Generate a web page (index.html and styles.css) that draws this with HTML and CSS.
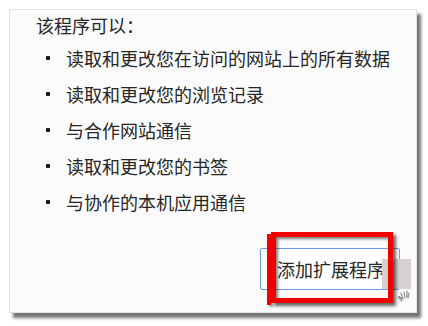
FILE: index.html
```html
<!DOCTYPE html>
<html lang="zh-CN">
<head>
<meta charset="utf-8">
<title>添加扩展程序</title>
<link rel="stylesheet" href="styles.css">
</head>
<body>
<div class="dialog">
  <div class="title">该程序可以：</div>
  <ul class="perms">
    <li>读取和更改您在访问的网站上的所有数据</li>
    <li>读取和更改您的浏览记录</li>
    <li>与合作网站通信</li>
    <li>读取和更改您的书签</li>
    <li>与协作的本机应用通信</li>
  </ul>
  <div class="footer">
    <button class="add-btn">添加扩展程序</button>
  </div>
</div>
<div class="cover"></div>
<div class="mark-line"></div>
<div class="mark-box"></div>
<svg class="cursor" width="16" height="16" viewBox="0 0 16 16">
  <path d="M2 10 L6 14 M5 6 L7 12 M8 5 L9 11 M11 4 L11 10 M13 6 L12 11" stroke="#8a8a8a" stroke-width="1.2" fill="none" stroke-linecap="round"/>
  <path d="M3 9 L6 12" stroke="#555" stroke-width="1" fill="none"/>
</svg>
</body>
</html>
```
FILE: styles.css
```css
html, body {
  margin: 0;
  padding: 0;
  background: #ffffff;
}
body {
  position: relative;
  width: 428px;
  height: 326px;
  overflow: hidden;
  font-family: "Noto Sans CJK SC", "Noto Sans", sans-serif;
  color: #262626;
}
.dialog {
  margin: 9px 0 0 9px;
  width: 408px;
  height: 304px;
  box-sizing: border-box;
  background: #fbfbfb;
  border: 1px solid #e4e4e4;
  box-shadow: 4px 5px 3px rgba(0, 0, 0, 0.55);
  display: flex;
  flex-direction: column;
  padding: 3px 0 0 26px;
}
.title {
  font-size: 18px;
  line-height: 24px;
}
.perms {
  list-style: none;
  margin: 3px 0 0 0;
  padding: 0;
}
.perms li {
  display: flex;
  align-items: center;
  font-size: 18px;
  line-height: 36px;
  white-space: nowrap;
}
.perms li::before {
  content: "";
  width: 4px;
  height: 4px;
  border-radius: 1px;
  background: #111;
  margin: 0 16px 0 10px;
  flex: none;
}
.footer {
  margin-top: auto;
  display: flex;
  justify-content: flex-end;
  padding: 0 16px 22px 0;
}
.add-btn {
  width: 140px;
  height: 42px;
  box-sizing: border-box;
  background: #ffffff;
  border: 1px solid #6f9be8;
  border-radius: 2px;
  font-family: "Noto Sans CJK SC", "Noto Sans", sans-serif;
  font-size: 18px;
  color: #262626;
  text-align: left;
  padding: 0 0 0 16px;
  white-space: nowrap;
  overflow: hidden;
}
.cover {
  position: absolute;
  left: 382px;
  top: 259px;
  width: 29px;
  height: 30px;
  background: #d8cfd2;
}
.mark-line {
  position: absolute;
  left: 267px;
  top: 234px;
  width: 4px;
  height: 71px;
  background: #f20000;
  box-shadow: 2px 2px 2px rgba(0, 0, 0, 0.35);
}
.mark-box {
  position: absolute;
  left: 271px;
  top: 232px;
  width: 122px;
  height: 71px;
  box-sizing: border-box;
  border: 5px solid #f20000;
  box-shadow: 3px 3px 3px rgba(0, 0, 0, 0.6), inset 2px 2px 3px rgba(0, 0, 0, 0.5);
}
.cursor {
  position: absolute;
  left: 396px;
  top: 287px;
}
```
